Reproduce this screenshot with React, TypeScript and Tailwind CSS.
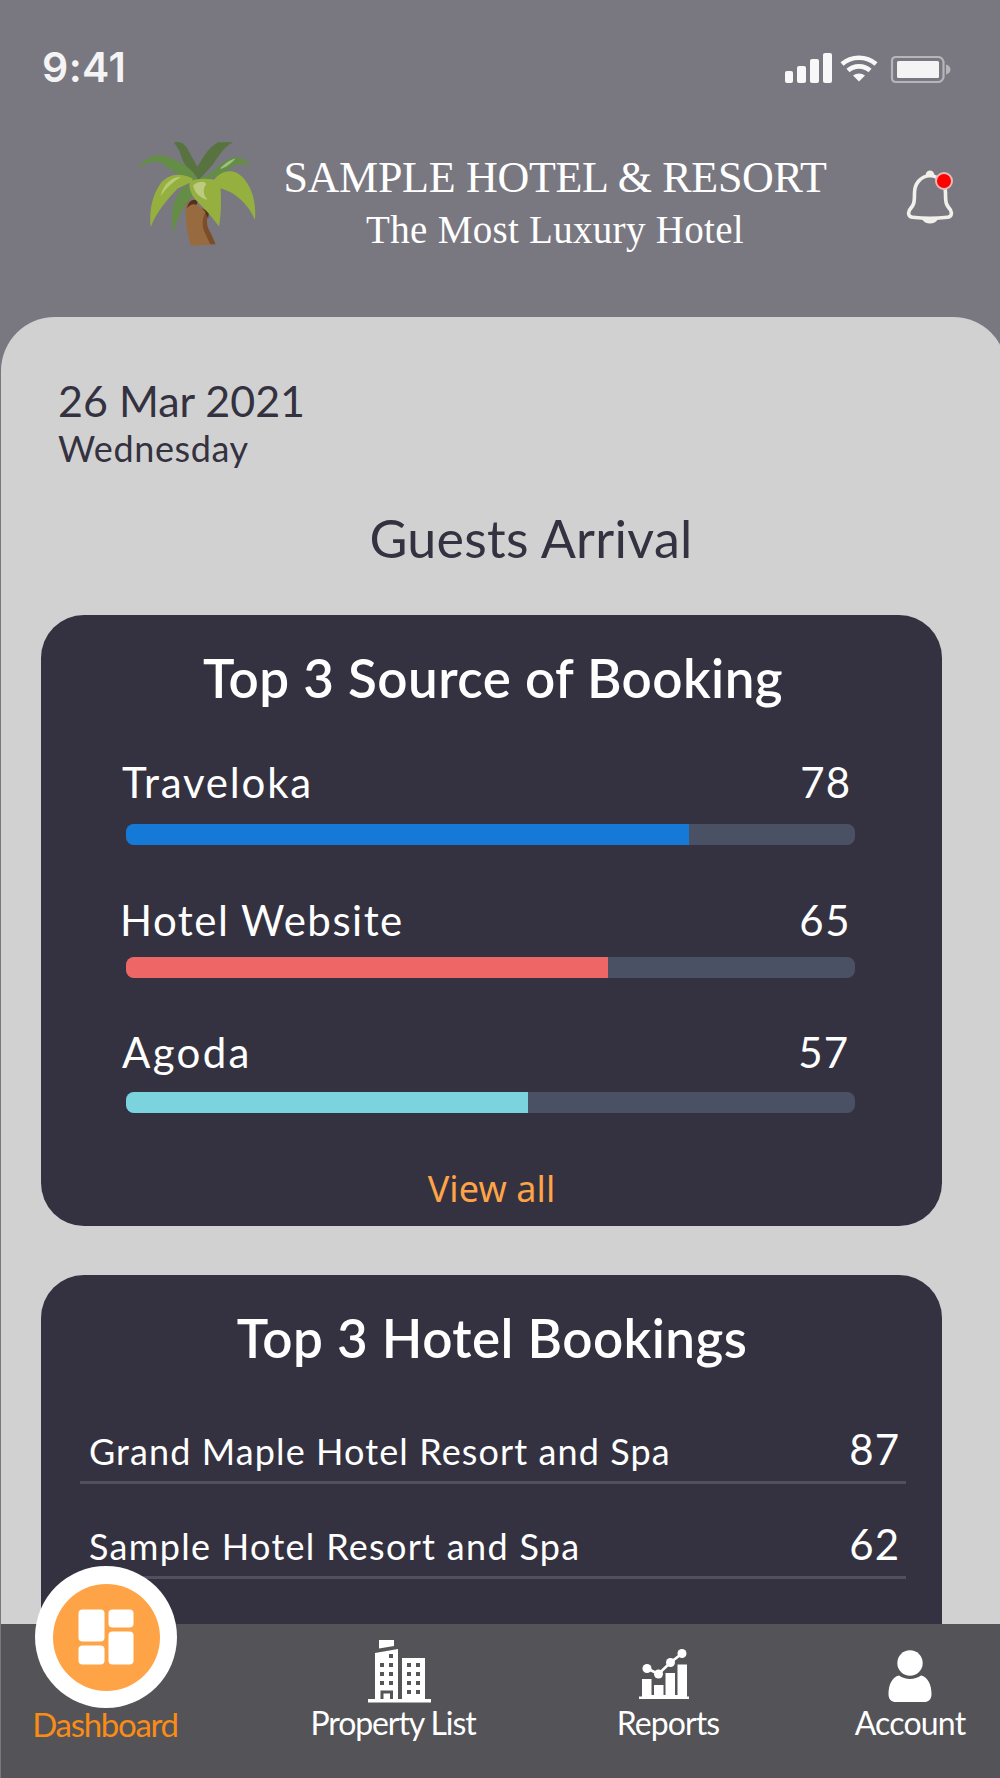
import type { ReactNode } from "react"
import clsx from "clsx"

const sources = [
  { name: "Traveloka", count: 78, fill: 77.2, color: "bg-[#1579d8]", row: "mt-[50px]", bar: "mt-[18px]", label: "-ml-[4px] tracking-[1.8px]", value: "tracking-[1px]" },
  { name: "Hotel Website", count: 65, fill: 66.1, color: "bg-[#ee6666]", row: "mt-[51px]", bar: "mt-[13px]", label: "-ml-[6px] tracking-[1.5px]", value: "tracking-[1.5px]" },
  { name: "Agoda", count: 57, fill: 55.1, color: "bg-[#7bd4dd]", row: "mt-[50px]", bar: "mt-[16px]", label: "-ml-[4px] tracking-[2.3px]", value: "mr-[2px] tracking-[1px]" },
]

const hotels = [
  { name: "Grand Maple Hotel Resort and Spa", count: 87, row: "mt-[57px]", tracking: "tracking-[1.1px]" },
  { name: "Sample Hotel Resort and Spa", count: 62, row: "mt-[36px]", tracking: "tracking-[1.3px]" },
]

function StatusBar() {
  return (
    <div className="flex h-[34px] items-center justify-between pr-[48px] pl-[41px]">
      <span className="font-['Inter'] text-[41px] leading-[34px] font-semibold tracking-[0.4px] text-[#f4f4f5]">9:41</span>
      <svg width="168" height="34" viewBox="0 0 168 34" fill="#f8f8f9">
        <rect x="1" y="21" width="8" height="12" rx="2" />
        <rect x="13" y="16" width="9" height="17" rx="2" />
        <rect x="26" y="9" width="9" height="24" rx="2" />
        <rect x="39" y="3" width="9" height="30" rx="2" />
        <g fill="none" stroke="#f8f8f9" strokeWidth="4.6">
          <path d="M58 14C67.5 5.600 82.500 5.600 92 14" />
          <path d="M64 20.500C70 15 80 15 86 20.500" />
        </g>
        <path d="M69 25.500C72.500 22.700 77.500 22.700 81 25.500L75 31.500Z" />
        <path
          d="M112 7H154C157 7 158.500 8.500 159.500 11.500V27.500C158.500 30.500 157 32 154 32H112C109.500 32 108 30.500 108 28V11C108 8.500 109.500 7 112 7Z"
          fill="none"
          stroke="#b5b5ba"
          strokeWidth="2.200"
        />
        <rect x="113" y="11" width="42" height="17" rx="1.500" fill="#f4f4f4" />
        <path d="M162 14.500C168 16 168 23 162 24.500Z" fill="#b5b5ba" />
      </svg>
    </div>
  )
}

function PalmTree() {
  return (
    <svg width="122" height="108" viewBox="54 64 360 318" className="shrink-0">
      <path d="M198 250C205 236 228 232 240 262L268 255C258 285 252 305 262 325L286 368L214 373C202 340 196 300 198 250Z" fill="#976b3f" />
      <path d="M262 262L270 270C256 295 258 312 272 336L286 368H270L252 330C244 308 248 285 262 262Z" fill="#7d4c29" />
      <path d="M202 262C206 240 220 232 234 240L230 252C218 248 210 252 202 262ZM244 262L266 272L264 292L254 270Z" fill="#54301f" />
      <path d="M163 67C190 64 198 76 208 96L232 140C250 110 268 78 294 67H338C308 80 290 118 272 140C258 156 246 168 236 178C212 156 188 132 180 94Z" fill="#58733f" />
      <path d="M54 145C88 104 118 98 154 114C190 128 218 148 232 174L214 178C176 162 148 148 130 130C110 120 86 126 54 145Z" fill="#648d45" />
      <path d="M240 172C276 166 302 120 338 112C362 108 378 122 390 138C368 128 350 130 336 140C310 158 282 174 244 182Z" fill="#648d45" />
      <path d="M300 143C318 126 330 118 344 116C330 132 318 140 302 146Z" fill="#9dbf83" />
      <path d="M202 192L220 224C186 258 174 290 162 334C150 270 164 216 202 192Z" fill="#648d45" />
      <path d="M218 174C180 156 144 160 120 194C98 228 90 268 94 318C114 270 142 238 174 204L216 184Z" fill="#95b03e" />
      <path d="M124 226C132 190 158 168 184 170C166 182 148 192 124 226Z" fill="#b9ca75" />
      <path d="M282 178C304 148 344 142 372 178C396 208 406 250 402 296C384 254 348 216 302 204Z" fill="#95b03e" />
      <path d="M210 182C230 172 278 172 300 184C302 228 304 272 296 316C270 280 250 260 226 236C212 220 206 198 210 182Z" fill="#95b03e" />
      <path d="M220 194C238 180 258 182 258 192C248 204 248 220 262 238C240 230 222 216 220 194Z" fill="#bccb80" />
    </svg>
  )
}

function Bell() {
  return (
    <div className="relative">
      <svg width="48" height="58" viewBox="0 0 48 58" fill="none" stroke="#f2f0ea" strokeWidth="3.600">
        <path d="M20 6.500C21 2.500 27 2.500 28 6.500L29 10H19Z" fill="#f2f0ea" stroke="none" />
        <path d="M24 8.500C14 9.500 8.500 17 8.500 26C8.500 36 8 38 3.500 43C1.500 47 3 50 6.500 50.300C17 51.600 31 51.600 41.500 50.300C45 50 46.500 47 44.500 43C40 38 39.500 36 39.500 26C39.500 17 34 9.500 24 8.500Z" />
        <path d="M16 52C19 58 29 58 32 52Z" fill="#f2f0ea" stroke="none" />
      </svg>
      <span className="absolute top-[5px] right-px size-[18px] rounded-full border-2 border-[#e9b9bc] bg-[#ff0000]" />
    </div>
  )
}

function Card({ title, className, titleClass, children }: { title: string; className: string; titleClass: string; children: ReactNode }) {
  return (
    <section className={clsx("ml-[40px] w-[901px] rounded-[43px] bg-[#343240] pt-[33px] text-white", className)}>
      <h2 className={clsx("text-center text-[53px] leading-[60px] font-semibold tracking-[0.45px] whitespace-nowrap", titleClass)}>{title}</h2>
      {children}
    </section>
  )
}

function BuildingIcon() {
  const windows = [
    [13, 24], [22, 24], [13, 33], [22, 33], [13, 42], [22, 42], [22, 15],
    [40, 24], [49, 24], [40, 33], [49, 33], [40, 42], [49, 42], [40, 51], [49, 51],
  ]
  return (
    <svg width="64" height="64" viewBox="0 0 64 64" fill="#fff">
      <path d="M11 1H26V7L11 9.500ZM7 14L30 10V60H7ZM34 19H57V60H34ZM0 60H63V63.500H0Z" />
      <g fill="#545357">
        {windows.map(([x, y]) => (
          <rect key={`${x}-${y}`} x={x - 1} y={y} width="4" height="4" />
        ))}
        <path d="M12.500 51.500H25V60H22V54.500H15.500V60H12.500Z" />
      </g>
    </svg>
  )
}

function ReportsIcon() {
  return (
    <svg width="50" height="52" viewBox="0 0 50 52" fill="#fff">
      <path d="M3 31H12.500V48H3ZM15 37H24.500V48H15ZM26.500 25H36V48H26.500ZM38.500 16.500H48V48H38.500ZM0 48.500H50V51H0ZM3 47H48V49H3Z" />
      <path d="M8 20.500L19.500 26L31.500 14.500L43 5.500" fill="none" stroke="#fff" strokeWidth="2.600" />
      <circle cx="8" cy="20.500" r="4.500" />
      <circle cx="19.500" cy="26" r="4.500" />
      <circle cx="31.500" cy="14.500" r="4.500" />
      <circle cx="43" cy="5.500" r="4.500" />
    </svg>
  )
}

function AccountIcon() {
  return (
    <svg width="44" height="53" viewBox="0 0 44 53" fill="#fff">
      <circle cx="22" cy="13" r="12.700" />
      <path d="M11 25.500C17 30 27 30 33 25.500C40 27 43.500 35 43.500 44C43.500 49.500 40.500 52 36 52H8C3.500 52 .5 49.500 .5 44C.5 35 4 27 11 25.500Z" />
    </svg>
  )
}

function DashboardIcon() {
  return (
    <svg width="56" height="56" viewBox="0 0 56 56" fill="#fff">
      <rect x="0.500" y="0.500" width="26" height="32" rx="4" />
      <rect x="30.500" y="0.500" width="25" height="18" rx="4" />
      <rect x="0.500" y="36.500" width="26" height="19" rx="4" />
      <rect x="30.500" y="22.500" width="25" height="33" rx="4" />
    </svg>
  )
}

function NavItem({ label, icon, className, iconClass }: { label: string; icon: ReactNode; className: string; iconClass: string }) {
  return (
    <a className={clsx("flex h-[104px] flex-col items-center justify-between", className)}>
      <span className={clsx("flex", iconClass)}>{icon}</span>
      <span className="text-[32px] leading-[40px] whitespace-nowrap">{label}</span>
    </a>
  )
}

export default function App() {
  return (
    <div className="flex h-[1778px] w-[1000px] flex-col overflow-hidden bg-[#797881] pl-px font-['Lato',sans-serif]">
      <header className="flex h-[317px] shrink-0 flex-col pt-[50px]">
        <StatusBar />
        <div className="mt-[57px] flex items-start pl-[136px]">
          <PalmTree />
          <div className="ml-[24px] flex w-[544px] flex-col items-center pt-[13px] font-['Liberation_Serif',serif] whitespace-nowrap text-white">
            <h1 className="text-[44px] leading-[48px] tracking-[-0.3px]">SAMPLE HOTEL &amp; RESORT</h1>
            <p className="mt-[4px] text-[39px] leading-[48px] tracking-[0.3px]">The Most Luxury Hotel</p>
          </div>
          <div className="mt-[26px] ml-[79px]">
            <Bell />
          </div>
        </div>
      </header>

      <main className="min-h-0 w-[1006px] flex-1 overflow-hidden rounded-t-[54px] bg-[#d1d1d1] pt-[60px] text-[#343240]">
        <p className="ml-[57px] text-[43px] leading-[48px]">26 Mar 2021</p>
        <p className="mt-[3px] ml-[57px] text-[36px] leading-[40px] tracking-[0.6px]">Wednesday</p>
        <h1 className="mt-[40px] w-[1060px] text-center text-[52px] leading-[60px] tracking-[0.3px]">Guests Arrival</h1>

        <Card title="Top 3 Source of Booking" className="mt-[47px] h-[611px]" titleClass="pl-[3px]">
          {sources.map((source) => (
            <div key={source.name} className={clsx("pr-[87px] pl-[85px]", source.row)}>
              <div className="flex justify-between pr-[4px] text-[42px] leading-[48px]">
                <span className={source.label}>{source.name}</span>
                <span className={source.value}>{source.count}</span>
              </div>
              <div className={clsx("h-[21px] overflow-hidden rounded-[8px] bg-[#4a5164]", source.bar)}>
                <div className={clsx("h-full", source.color)} style={{ width: `${source.fill}%` }} />
              </div>
            </div>
          ))}
          <a className="mt-[56px] block text-center font-['Noto_Sans'] text-[36px] leading-[40px] tracking-[0.1px] text-[#fea447]">View all</a>
        </Card>

        <Card title="Top 3 Hotel Bookings" className="mt-[49px] h-[611px]" titleClass="pl-px">
          {hotels.map((hotel) => (
            <div key={hotel.name} className={clsx("mr-[36px] ml-[39px] border-b-3 border-[#52505f] pb-[8px]", hotel.row)}>
              <div className="flex h-[48px] items-baseline justify-between pr-[6px] pl-[9px] leading-[48px]">
                <span className={clsx("text-[36px]", hotel.tracking)}>{hotel.name}</span>
                <span className="text-[42px] tracking-[1px]">{hotel.count}</span>
              </div>
            </div>
          ))}
        </Card>
      </main>

      <nav className="flex h-[154px] shrink-0 items-start bg-[#545357] text-white">
        <a className="z-10 -mt-[58px] ml-[31px] flex w-[148px] flex-col items-center text-[#f98c16]">
          <span className="flex size-[142px] items-center justify-center rounded-full bg-white">
            <span className="flex size-[107px] items-center justify-center rounded-full bg-[#fea447]">
              <DashboardIcon />
            </span>
          </span>
          <span className="-mt-[4px] -ml-[2px] text-[33px] leading-[40px] tracking-[-1.3px]">Dashboard</span>
        </a>
        <NavItem label="Property List" icon={<BuildingIcon />} className="mt-[15px] ml-[128px] w-[170px] tracking-[-1.1px]" iconClass="ml-[14px]" />
        <NavItem label="Reports" icon={<ReportsIcon />} className="mt-[15px] ml-[130px] w-[120px] tracking-[-0.9px]" iconClass="-ml-[8px] pt-[9px]" />
        <NavItem label="Account" icon={<AccountIcon />} className="mt-[15px] ml-[122px] w-[120px] tracking-[-0.8px]" iconClass="pt-[11px]" />
      </nav>
    </div>
  )
}
